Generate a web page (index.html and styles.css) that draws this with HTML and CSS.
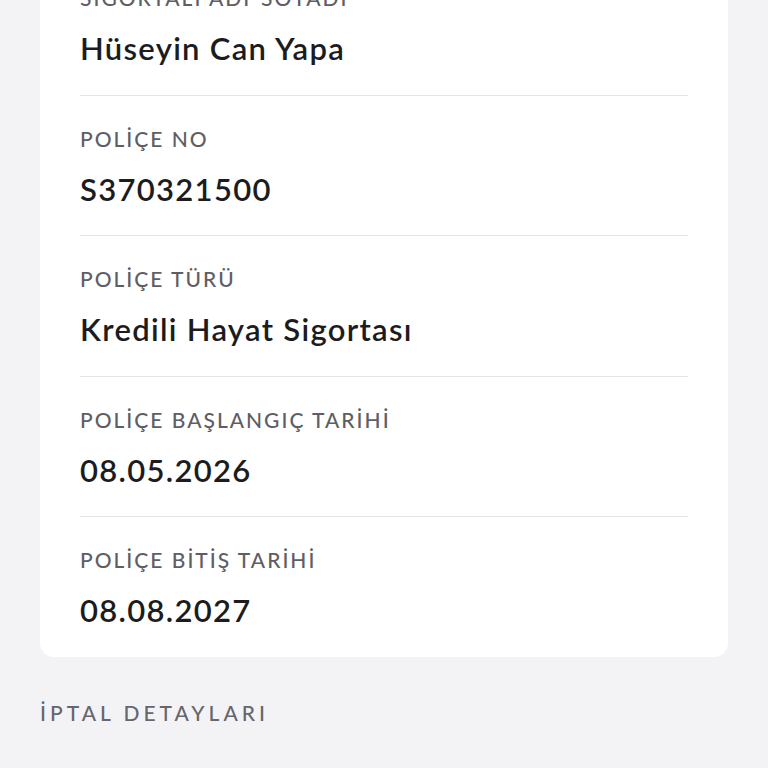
FILE: index.html
```html
<!DOCTYPE html>
<html lang="tr">
<head>
  <meta charset="UTF-8">
  <meta name="viewport" content="width=device-width, initial-scale=1.0">
  <title>Poliçe Detayları</title>
  <link rel="stylesheet" href="styles.css">
</head>
<body>
  <div class="page">
    <div class="card">
      <div class="row">
        <div class="label">SİGORTALI ADI-SOYADI</div>
        <div class="value">Hüseyin Can Yapa</div>
      </div>
      <div class="row">
        <div class="label">POLİÇE NO</div>
        <div class="value">S370321500</div>
      </div>
      <div class="row">
        <div class="label">POLİÇE TÜRÜ</div>
        <div class="value">Kredili Hayat Sigortası</div>
      </div>
      <div class="row">
        <div class="label">POLİÇE BAŞLANGIÇ TARİHİ</div>
        <div class="value">08.05.2026</div>
      </div>
      <div class="row">
        <div class="label">POLİÇE BİTİŞ TARİHİ</div>
        <div class="value">08.08.2027</div>
      </div>
    </div>

    <h2 class="section-title">İPTAL DETAYLARI</h2>
  </div>
</body>
</html>
```

FILE: styles.css
```css
body {
  margin: 0;
  background: #f3f3f6;
  font-family: Lato, "Liberation Sans", sans-serif;
}
.page {
  margin-top: -45px;
  padding: 0 40px 60px;
}
.card {
  background: #fff;
  border-radius: 14px;
  padding: 0 40px;
}
.row {
  padding: 31px 0 27.5px;
  border-bottom: 1px solid #e4e4e7;
}
.row:last-child {
  border-bottom: none;
}
.label {
  font-size: 21px;
  line-height: 24px;
  font-weight: 500;
  color: #5e5e64;
  letter-spacing: 2px;
}
.value {
  margin-top: 20px;
  font-size: 31px;
  line-height: 37px;
  font-weight: 600;
  color: #1c1c1e;
  letter-spacing: 1.3px;
}
.section-title {
  margin: 44px 0 0;
  font-size: 21px;
  line-height: 24px;
  font-weight: 500;
  color: #66666c;
  letter-spacing: 4px;
}
```
